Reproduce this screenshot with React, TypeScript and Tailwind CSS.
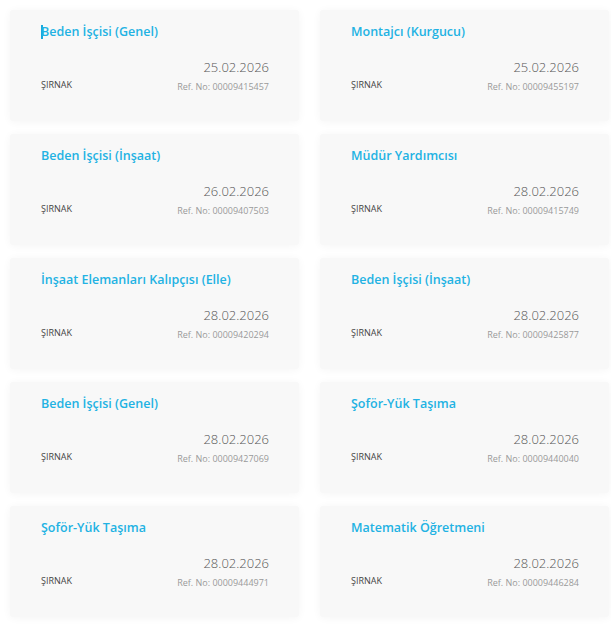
import React from 'react';

type Job = { title: string; date: string; city: string; ref: string };

const jobs: Job[] = [
  { title: 'Beden İşçisi (Genel)', date: '25.02.2026', city: 'ŞIRNAK', ref: '00009415457' },
  { title: 'Montajcı (Kurgucu)', date: '25.02.2026', city: 'ŞIRNAK', ref: '00009455197' },
  { title: 'Beden İşçisi (İnşaat)', date: '26.02.2026', city: 'ŞIRNAK', ref: '00009407503' },
  { title: 'Müdür Yardımcısı', date: '28.02.2026', city: 'ŞIRNAK', ref: '00009415749' },
  { title: 'İnşaat Elemanları Kalıpçısı (Elle)', date: '28.02.2026', city: 'ŞIRNAK', ref: '00009420294' },
  { title: 'Beden İşçisi (İnşaat)', date: '28.02.2026', city: 'ŞIRNAK', ref: '00009425877' },
  { title: 'Beden İşçisi (Genel)', date: '28.02.2026', city: 'ŞIRNAK', ref: '00009427069' },
  { title: 'Şoför-Yük Taşıma', date: '28.02.2026', city: 'ŞIRNAK', ref: '00009440040' },
  { title: 'Şoför-Yük Taşıma', date: '28.02.2026', city: 'ŞIRNAK', ref: '00009444971' },
  { title: 'Matematik Öğretmeni', date: '28.02.2026', city: 'ŞIRNAK', ref: '00009446284' },
];

function JobCard({ job, caret }: { job: Job; caret?: boolean }) {
  return (
    <div className="h-[111px] bg-[#f8f8f8] rounded-[3px] shadow-[0_1px_8px_rgba(0,0,0,0.045)] pl-[31px] pr-[30px] pt-[13px] flex flex-col">
      <h3 className="text-[12.5px] leading-[18px] font-semibold text-[#22b2e3] flex items-center">
        {caret && <span className="inline-block w-[2px] h-[14px] bg-[#1aa9dc] -mr-[2px]" />}
        {job.title}
      </h3>
      <div className="mt-[17px] flex justify-between items-end">
        <span className="text-[9px] leading-[14px] text-[#444] mb-[2px]">{job.city}</span>
        <div className="flex flex-col items-end">
          <span className="text-[13px] leading-[18px] text-[#555] font-light">{job.date}</span>
          <span className="mt-[4px] text-[9px] leading-[14px] text-[#9a9a9a]">Ref. No: {job.ref}</span>
        </div>
      </div>
    </div>
  );
}

export default function App() {
  return (
    <div className="bg-white w-[611px] h-[629px] overflow-hidden" style={{ fontFamily: '"Open Sans", "Noto Sans", sans-serif' }}>
      <div className="pt-[10px] pl-[10px] pr-[2px] grid grid-cols-[289px_289px] gap-x-[21px] gap-y-[13px]">
        {jobs.map((job, i) => (
          <JobCard key={i} job={job} caret={i === 0} />
        ))}
      </div>
    </div>
  );
}
